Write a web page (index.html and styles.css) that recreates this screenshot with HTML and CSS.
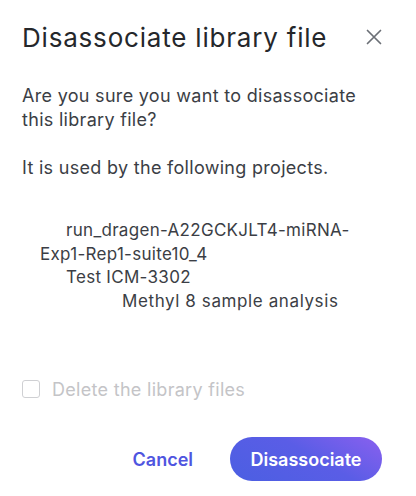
FILE: index.html
```html
<!DOCTYPE html>
<html lang="en">
<head>
    <meta charset="UTF-8">
    <meta name="viewport" content="width=device-width, initial-scale=1.0">
    <title>Disassociate library file</title>
    <link rel="stylesheet" href="styles.css">
</head>
<body>
    <div class="dialog">
        <div class="dialog-header">
            <h1 class="dialog-title">Disassociate library file</h1>
            <button class="close-btn" aria-label="Close">
                <svg width="16" height="16" viewBox="0 0 16 16">
                    <path d="M1.5 1.5 L14.5 14.5 M14.5 1.5 L1.5 14.5" stroke="#6b6f76" stroke-width="1.7" stroke-linecap="round" fill="none"/>
                </svg>
            </button>
        </div>

        <p class="dialog-text">Are you sure you want to disassociate this library file?</p>
        <p class="dialog-text">It is used by the following projects.</p>

        <div class="project-list">
            <div class="project-item">run_dragen-A22GCKJLT4-miRNA-Exp1-Rep1-suite10_4</div>
            <div class="project-item">Test ICM-3302</div>
            <div class="project-item sub-item">Methyl 8 sample analysis</div>
        </div>

        <label class="delete-option">
            <span class="checkbox"></span>
            Delete the library files
        </label>

        <div class="dialog-actions">
            <button class="cancel-btn">Cancel</button>
            <button class="confirm-btn">Disassociate</button>
        </div>
    </div>
</body>
</html>
```

FILE: styles.css
```css
/* Base Styles */
body {
    font-family: 'Inter', 'Noto Sans', sans-serif;
    margin: 0;
    padding: 0;
    background-color: #ffffff;
    color: #3b3e45;
}

/* Dialog */
.dialog {
    width: 416px;
    box-sizing: border-box;
    padding: 20px 34px 0 22px;
}

.dialog-header {
    display: flex;
    justify-content: space-between;
    align-items: center;
    height: 34px;
}

.dialog-title {
    margin: 0;
    font-size: 26px;
    font-weight: 400;
    color: #25272b;
    letter-spacing: 0.8px;
}

.close-btn {
    background: none;
    border: none;
    padding: 0;
    width: 16px;
    height: 16px;
    cursor: pointer;
}

.dialog-text {
    margin: 0;
    font-size: 18px;
    line-height: 24px;
    letter-spacing: 0.3px;
    color: #3b3e45;
}

.dialog-header + .dialog-text {
    margin-top: 30px;
}

.dialog-text + .dialog-text {
    margin-top: 24px;
}

/* Project list */
.project-list {
    margin-top: 39px;
    padding-left: 18px;
    font-size: 17px;
    line-height: 23.5px;
    letter-spacing: 0.3px;
    color: #3b3e45;
}

.project-item {
    text-indent: 26px;
}

.sub-item {
    text-indent: 82px;
    letter-spacing: 0.6px;
}

/* Checkbox */
.delete-option {
    display: flex;
    align-items: center;
    gap: 12px;
    margin-top: 66px;
    font-size: 18px;
    letter-spacing: 0.3px;
    color: #c4c4c7;
    height: 20px;
}

.checkbox {
    display: block;
    flex-shrink: 0;
    width: 16px;
    height: 16px;
    border: 1px solid #cfd0d3;
    border-radius: 3px;
}

/* Buttons */
.dialog-actions {
    display: flex;
    justify-content: flex-end;
    align-items: center;
    gap: 37px;
    margin-top: 38px;
}

.cancel-btn {
    background: none;
    border: none;
    padding: 0;
    font-family: inherit;
    font-size: 18px;
    font-weight: 600;
    color: #4f55e0;
    cursor: pointer;
}

.confirm-btn {
    width: 152px;
    height: 44px;
    border: none;
    border-radius: 22px;
    background: linear-gradient(30deg, #4b5fe2 0%, #5a5de6 55%, #8a60ef 100%);
    color: white;
    font-family: inherit;
    font-size: 18px;
    font-weight: 600;
    cursor: pointer;
}
```
